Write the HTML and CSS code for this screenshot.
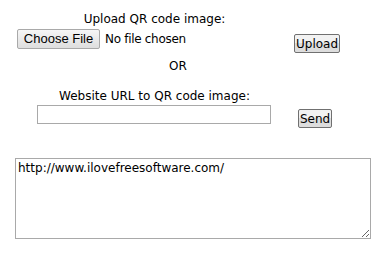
FILE: index.html
```html
<!DOCTYPE html>
<html>
  <head>
    <title>QR Code Reader</title>
    <link rel="stylesheet" href="styles.css">
  </head>
  <body>
    <form class="qr-form">
      <div class="row row-upload">
        <div class="cell-main">
          <label class="caption">Upload QR code image:</label>
          <div class="file-field">
            <span class="file-btn">Choose File</span>
            <span class="file-name">No file chosen</span>
          </div>
        </div>
        <div class="cell-side">
          <input type="button" class="btn" value="Upload">
        </div>
      </div>

      <div class="or">OR</div>

      <div class="row row-url">
        <div class="cell-main">
          <label class="caption">Website URL to QR code image:</label>
          <input type="text" class="url-input">
        </div>
        <div class="cell-side">
          <input type="button" class="btn btn-send" value="Send">
        </div>
      </div>

      <textarea class="result">http://www.ilovefreesoftware.com/</textarea>
    </form>
  </body>
</html>
```

FILE: styles.css
```css
body {
  margin: 0;
  background: #fff;
  color: #000;
  font-family: "DejaVu Sans", Verdana, sans-serif;
  font-size: 12px;
}

.qr-form {
  padding: 12px 0 0 15px;
}

.row {
  display: flex;
  align-items: flex-start;
}

.cell-main {
  width: 279px;
  text-align: center;
}

.caption {
  display: block;
  line-height: 14px;
}

.file-field {
  display: flex;
  align-items: center;
  margin: 3px 0 0 2px;
  white-space: nowrap;
}

.file-btn {
  flex-shrink: 0;
  box-sizing: border-box;
  width: 83px;
  height: 20px;
  line-height: 18px;
  padding: 0;
  text-align: center;
  border: 1px solid #a9a9a9;
  border-radius: 2px;
  background: linear-gradient(#f6f6f6, #dedede);
  font-family: "Liberation Sans", Arial, sans-serif;
  font-size: 13px;
}

.file-name {
  margin-left: 5px;
  letter-spacing: -0.3px;
}

.btn {
  box-sizing: border-box;
  height: 19px;
  margin: 0;
  padding: 0 1px;
  border: 1px solid #707070;
  border-radius: 2px;
  background: linear-gradient(#f2f2f2 50%, #dddddd 50%);
  color: #000;
  font-family: "DejaVu Sans", Verdana, sans-serif;
  font-size: 12px;
}

.row-upload .btn {
  margin-top: 22px;
}

.or {
  width: 326px;
  margin-top: 6px;
  text-align: center;
  line-height: 14px;
}

.row-url {
  margin-top: 16px;
}

.url-input {
  display: block;
  box-sizing: border-box;
  width: 234px;
  height: 19px;
  margin: 2px 0 0 22px;
  border: 1px solid #a9a9a9;
}

.btn-send {
  margin: 20px 0 0 4px;
}

.result {
  display: block;
  box-sizing: border-box;
  width: 356px;
  height: 81px;
  margin-top: 30px;
  padding: 2px;
  border: 1px solid #a9a9a9;
  font-family: "DejaVu Sans", Verdana, sans-serif;
  font-size: 12px;
  resize: both;
}
```
